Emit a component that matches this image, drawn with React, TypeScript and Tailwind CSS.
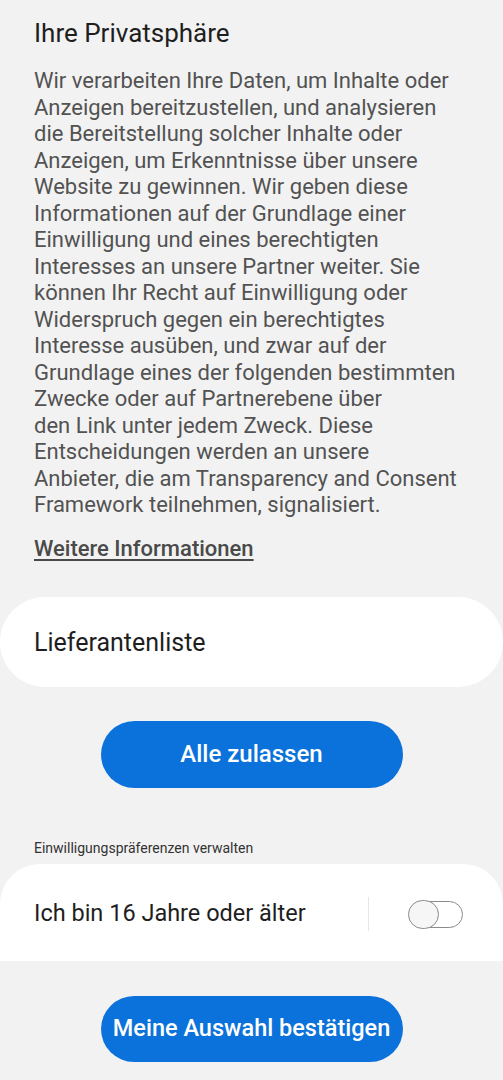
const lines = [
  'Wir verarbeiten Ihre Daten, um Inhalte oder',
  'Anzeigen bereitzustellen, und analysieren',
  'die Bereitstellung solcher Inhalte oder',
  'Anzeigen, um Erkenntnisse über unsere',
  'Website zu gewinnen. Wir geben diese',
  'Informationen auf der Grundlage einer',
  'Einwilligung und eines berechtigten',
  'Interesses an unsere Partner weiter. Sie',
  'können Ihr Recht auf Einwilligung oder',
  'Widerspruch gegen ein berechtigtes',
  'Interesse ausüben, und zwar auf der',
  'Grundlage eines der folgenden bestimmten',
  'Zwecke oder auf Partnerebene über',
  'den Link unter jedem Zweck. Diese',
  'Entscheidungen werden an unsere',
  'Anbieter, die am Transparency and Consent',
  'Framework teilnehmen, signalisiert.',
]

export default function App() {
  return (
    <div className="w-[503px] h-[1080px] overflow-hidden bg-[#f2f2f2] font-['Roboto',sans-serif]">
      {/* Kopf + Text */}
      <div className="px-[34px] pt-[17px]">
        <h1 className="text-[26px] leading-[32px] text-[#1e1e1e]">Ihre Privatsphäre</h1>
        <div className="mt-[19px] text-[22px] leading-[26.5px] text-[#525252]">
          {lines.map((l) => (
            <div key={l} className="whitespace-nowrap">{l}</div>
          ))}
        </div>
        <a className="block mt-[17px] text-[22px] leading-[26px] font-medium text-[#4a4a4a] underline underline-offset-[3px]">
          Weitere Informationen
        </a>
      </div>

      {/* Lieferantenliste */}
      <div className="mt-[35px] h-[90px] bg-white rounded-[45px] flex items-center px-[34px] pt-[3px]">
        <span className="text-[25px] text-[#1e1e1e]">Lieferantenliste</span>
      </div>

      <div className="flex justify-center mt-[34px]">
        <button className="w-[302px] h-[67px] rounded-full bg-[#0b72db] text-white text-[24px] font-medium">
          Alle zulassen
        </button>
      </div>

      <div className="mt-[52px] px-[34px] text-[14px] leading-[16px] text-[#333]">
        Einwilligungspräferenzen verwalten
      </div>

      {/* Alter */}
      <div className="mt-[8px] h-[97px] bg-white rounded-t-[40px] flex items-center pl-[34px] pr-[40px] pt-[4px]">
        <span className="flex-1 text-[23.5px] text-[#1e1e1e]">Ich bin 16 Jahre oder älter</span>
        <div className="w-px h-[34px] bg-[#e6e6e6]" />
        <div className="ml-[39px] relative w-[55px] h-[29px]">
          <div className="absolute inset-y-[1px] left-[2px] right-0 rounded-full border-[1.5px] border-[#8a8a8a]" />
          <div className="absolute left-0 top-0 w-[31px] h-[29px] rounded-full border-[1.5px] border-[#8a8a8a] bg-[#f6f6f6]" />
        </div>
      </div>

      <div className="flex justify-center mt-[35px]">
        <button className="w-[302px] h-[66px] rounded-full bg-[#0b72db] text-white text-[23.5px] font-medium">
          Meine Auswahl bestätigen
        </button>
      </div>
    </div>
  )
}
